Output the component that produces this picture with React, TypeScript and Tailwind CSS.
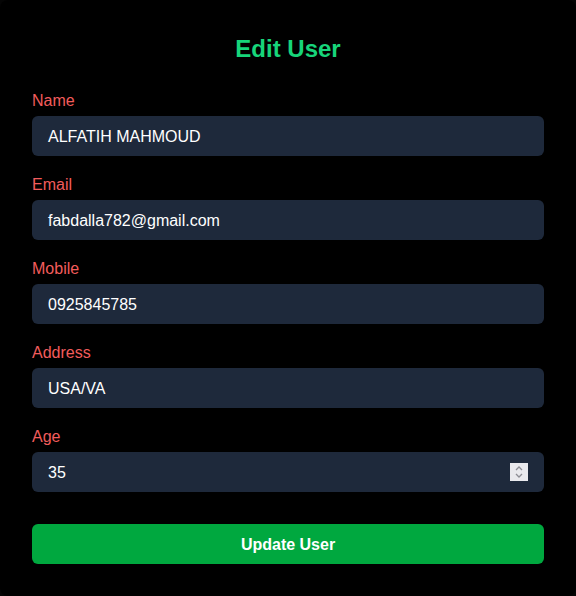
import React from "react";

const fields = [
  { label: "Name", value: "ALFATIH MAHMOUD" },
  { label: "Email", value: "fabdalla782@gmail.com" },
  { label: "Mobile", value: "0925845785" },
  { label: "Address", value: "USA/VA" },
  { label: "Age", value: "35", number: true },
];

export default function App() {
  return (
    <div className="w-[576px] h-[596px] bg-[#050505]" style={{ fontFamily: '"Liberation Sans", Arial, sans-serif' }}>
      <div className="w-full h-full bg-black rounded-lg p-8 flex flex-col">
        <h2 className="text-2xl leading-[34px] font-bold text-center text-[#17d57a] mb-[22px]">Edit User</h2>
        {fields.map((f) => (
          <div key={f.label} className="mb-4 flex flex-col">
            <label className="text-base leading-[26px] text-[#f25c5c] mb-[2px]">{f.label}</label>
            <div className="h-10 rounded-md bg-[#1e293b] px-4 pt-[2px] flex items-center justify-between text-white text-base">
              <span>{f.value}</span>
              {f.number && (
                <div className="w-[18px] h-[18px] -mt-[2px] bg-[#e9e9ed] flex items-center justify-center">
                  <svg width="10" height="14" viewBox="0 0 10 14" fill="none" stroke="#8d8d94" strokeWidth="1.3">
                    <path d="M2 5 L5 2 L8 5" />
                    <path d="M2 9 L5 12 L8 9" />
                  </svg>
                </div>
              )}
            </div>
          </div>
        ))}
        <button className="mt-4 h-10 pt-[2px] rounded-md bg-[#00a83f] text-white font-bold text-base">Update User</button>
      </div>
    </div>
  );
}
